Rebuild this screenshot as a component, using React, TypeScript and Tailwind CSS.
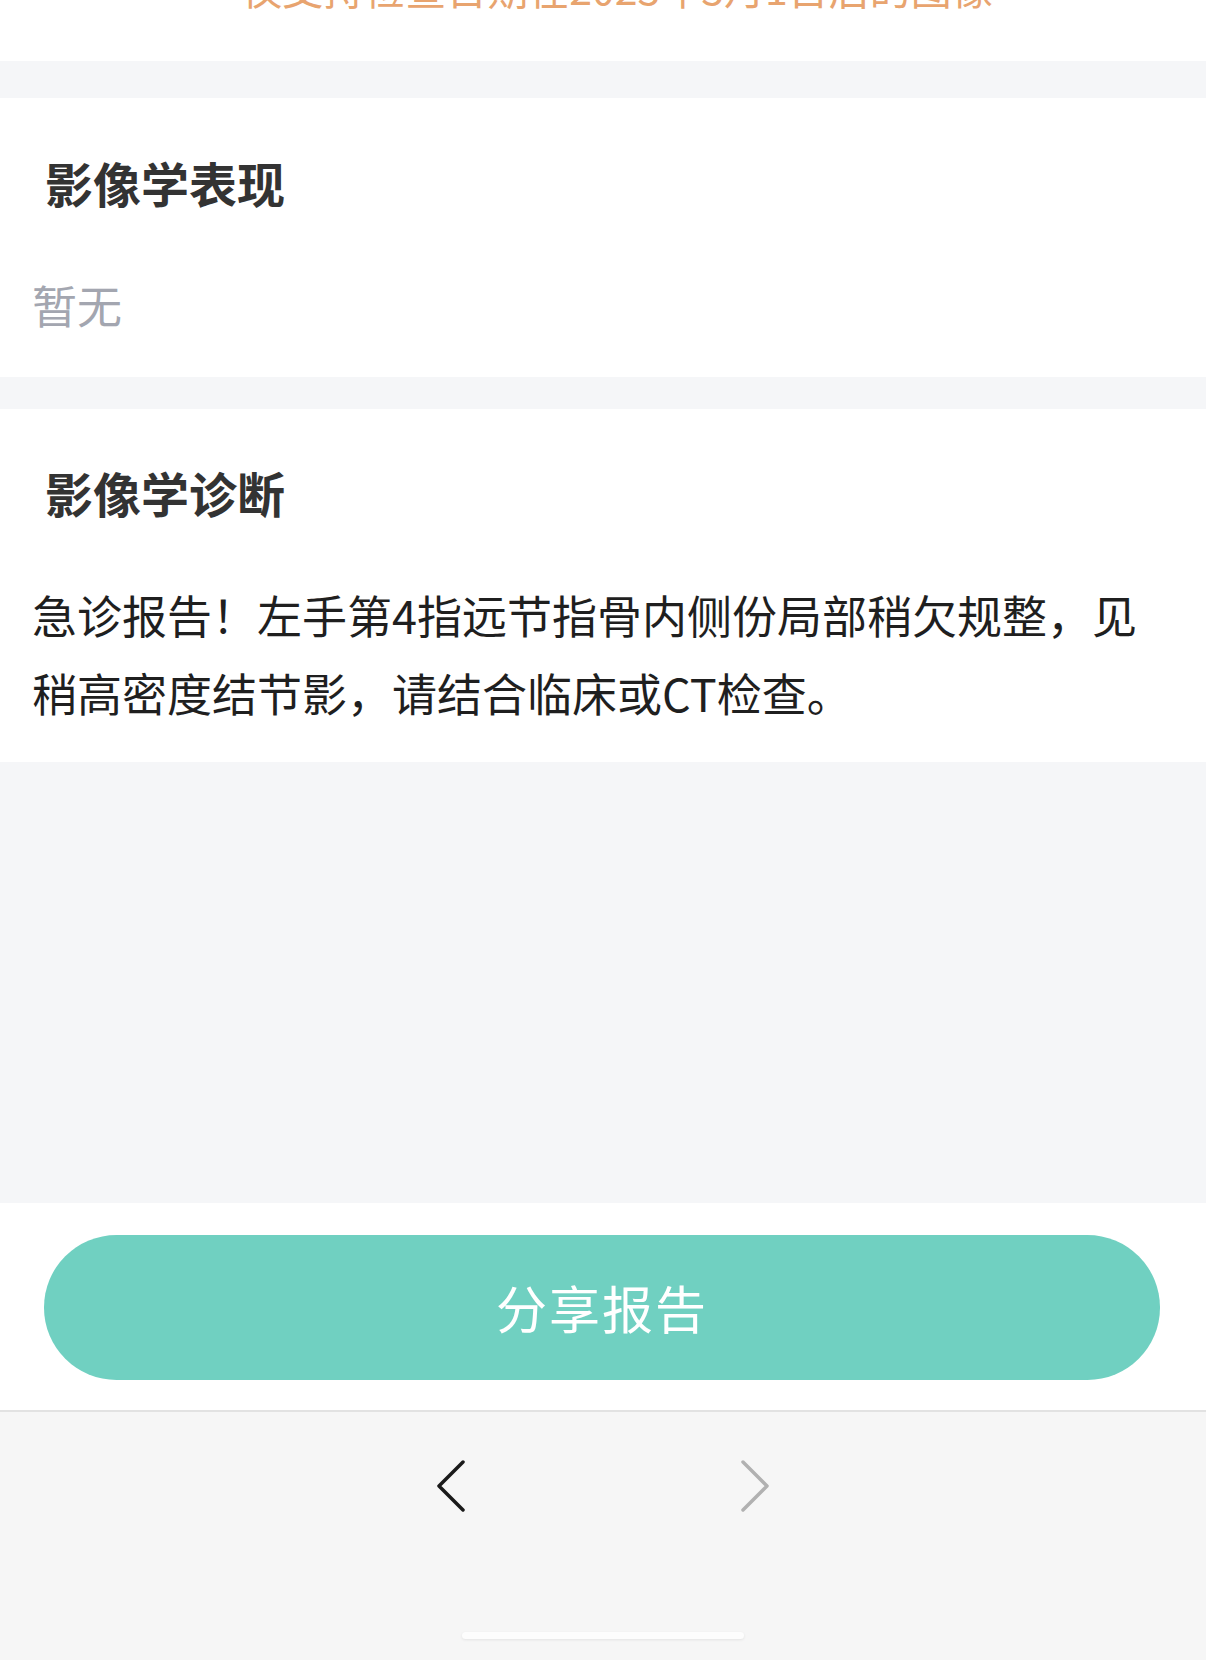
export default function App() {
  return (
    <div className="flex h-[1660px] w-[1206px] flex-col overflow-hidden bg-[#f5f6f8] font-['Noto_Sans_CJK_SC','Noto_Sans',sans-serif]">
      {/* notice strip, scrolled mostly out of view */}
      <div className="h-[61px] shrink-0 overflow-hidden bg-white">
        <p className="mt-[-33px] pl-[28px] text-center text-[41px] leading-[41px] text-[#e8a46f]">
          仅支持检查日期在2023年3月1日后的图像
        </p>
      </div>

      <div className="h-[37px] shrink-0" />

      <section className="shrink-0 bg-white pt-[54px] pb-[33px]">
        <h2 className="pl-[45px] text-[48px] font-semibold leading-[60px] text-[#333333]">影像学表现</h2>
        <p className="mt-[54px] px-[32px] text-[45px] leading-[78px] text-[#a3a6b0]">暂无</p>
      </section>

      <div className="h-[32px] shrink-0" />

      <section className="shrink-0 bg-white pt-[53px] pb-[30px]">
        <h2 className="pl-[45px] text-[48px] font-semibold leading-[60px] text-[#333333]">影像学诊断</h2>
        <p className="mt-[54px] px-[32px] text-[45px] leading-[78px] text-[#1f1f1f]">
          急诊报告！左手第4指远节指骨内侧份局部稍欠规整，见稍高密度结节影，请结合临床或CT检查。
        </p>
      </section>

      <div className="flex-1" />

      <div className="shrink-0 bg-white pt-[32px] pb-[30px]">
        <button
          type="button"
          className="ml-[44px] flex h-[145px] w-[1116px] items-center justify-center rounded-full bg-[#70d0c1] text-[51px] tracking-[2px] text-white"
        >
          分享报告
        </button>
      </div>

      <nav className="flex h-[250px] shrink-0 flex-col items-center border-t-2 border-[#e2e2e2] bg-[#f6f6f6] pt-[48px]">
        <div className="flex gap-[276px]">
          <svg width="28" height="52" viewBox="0 0 28 52" fill="none">
            <polyline points="26,2 2,26 26,50" stroke="#1a1a1a" strokeWidth="3.5" strokeLinecap="round" strokeLinejoin="round" />
          </svg>
          <svg width="28" height="52" viewBox="0 0 28 52" fill="none">
            <polyline points="2,2 26,26 2,50" stroke="#b1b1b1" strokeWidth="3.5" strokeLinecap="round" strokeLinejoin="round" />
          </svg>
        </div>
        <div className="mt-[120px] h-[7px] w-[282px] rounded-full bg-[#fdfdfd] shadow-[0_1px_3px_rgba(0,0,0,0.08)]" />
      </nav>
    </div>
  );
}
